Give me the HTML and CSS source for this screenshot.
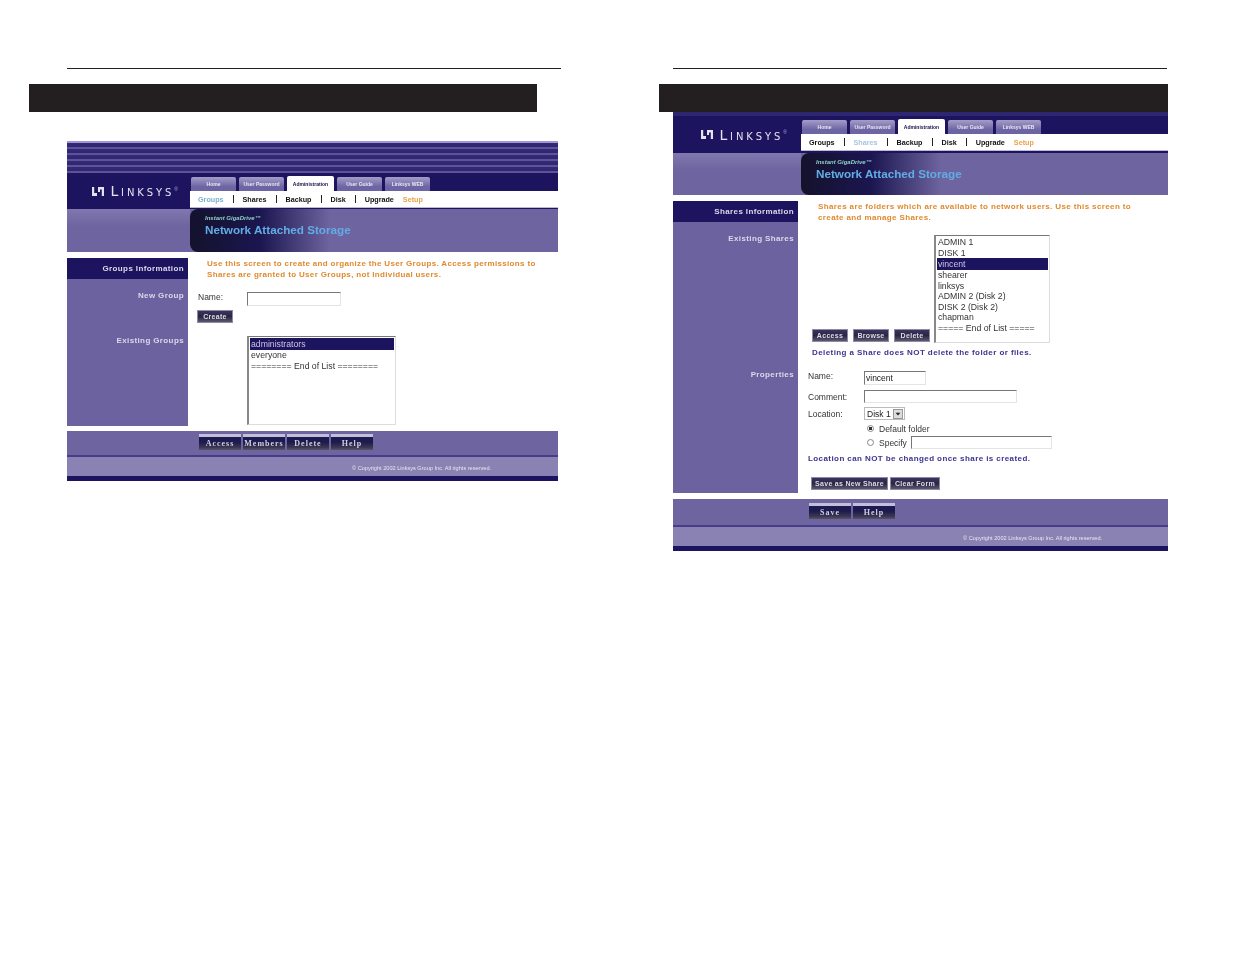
FILE: index.html
```html
<!DOCTYPE html>
<html lang="en">
<head>
<meta charset="utf-8">
<title>Linksys Network Attached Storage</title>
<link rel="stylesheet" href="styles.css">
</head>
<body>
<main class="spread">
  <section class="page page-left">
    <div class="rule"></div>
    <div class="blackbar"></div>
    <div class="nas">
      <div class="stripes"></div>
      <header class="masthead">
        <div class="logo">
          <svg class="logo-mark" viewBox="0 0 14 11" aria-hidden="true"><path d="M1 1v9h5V7H3.2V1zM7 1h6v9h-2.2V3.6H9V6H7z" fill="#e4e2ee"/></svg>
          <span class="logo-text">Linksys</span><span class="logo-reg">®</span>
        </div>
        <nav class="nav">
          <div class="tabs">
            <span class="tab">Home</span><span class="tab">User Password</span><span class="tab tab-on">Administration</span><span class="tab">User Guide</span><span class="tab">Linksys WEB</span>
          </div>
          <div class="subnav">
            <span class="sub sub-on">Groups</span><i class="bar"></i><span class="sub">Shares</span><i class="bar"></i><span class="sub">Backup</span><i class="bar"></i><span class="sub">Disk</span><i class="bar"></i><span class="sub">Upgrade</span><span class="sub sub-setup">Setup</span>
          </div>
        </nav>
      </header>
      <div class="banner">
        <div class="banner-side"></div>
        <div class="banner-title">
          <div class="banner-small">Instant GigaDrive™</div>
          <div class="banner-big">Network Attached Storage</div>
        </div>
      </div>
      <div class="body body-groups">
        <aside class="sidebar">
          <div class="side-head">Groups Information</div>
          <div class="side-label side-new">New Group</div>
          <div class="side-label side-existing">Existing Groups</div>
        </aside>
        <div class="content">
          <p class="intro">Use this screen to create and organize the User Groups. Access permissions to<br>Shares are granted to User Groups, not Individual users.</p>
          <div class="name-row"><span class="lbl lbl-up">Name:</span><input class="field field-name" type="text"></div>
          <button class="btn btn-create">Create</button>
          <div class="list list-groups">
            <div class="opt opt-on">administrators</div>
            <div class="opt">everyone</div>
            <div class="opt">======== End of List ========</div>
          </div>
        </div>
      </div>
      <div class="actions actions-groups">
        <button class="act">Access</button><button class="act">Members</button><button class="act">Delete</button><button class="act">Help</button>
      </div>
      <footer class="legal legal-left">© Copyright 2002 Linksys Group Inc. All rights reserved.</footer>
    </div>
  </section>

  <section class="page page-right">
    <div class="rule"></div>
    <div class="blackbar"></div>
    <div class="nas">
      <div class="stripes"></div>
      <header class="masthead">
        <div class="logo">
          <svg class="logo-mark" viewBox="0 0 14 11" aria-hidden="true"><path d="M1 1v9h5V7H3.2V1zM7 1h6v9h-2.2V3.6H9V6H7z" fill="#e4e2ee"/></svg>
          <span class="logo-text">Linksys</span><span class="logo-reg">®</span>
        </div>
        <nav class="nav">
          <div class="tabs">
            <span class="tab">Home</span><span class="tab">User Password</span><span class="tab tab-on">Administration</span><span class="tab">User Guide</span><span class="tab">Linksys WEB</span>
          </div>
          <div class="subnav">
            <span class="sub">Groups</span><i class="bar"></i><span class="sub sub-on sub-faint">Shares</span><i class="bar"></i><span class="sub">Backup</span><i class="bar"></i><span class="sub">Disk</span><i class="bar"></i><span class="sub">Upgrade</span><span class="sub sub-setup">Setup</span>
          </div>
        </nav>
      </header>
      <div class="banner">
        <div class="banner-side"></div>
        <div class="banner-title">
          <div class="banner-small">Instant GigaDrive™</div>
          <div class="banner-big">Network Attached Storage</div>
        </div>
      </div>
      <div class="body body-shares">
        <aside class="sidebar">
          <div class="side-head">Shares Information</div>
          <div class="side-label side-shares">Existing Shares</div>
          <div class="side-label side-props">Properties</div>
        </aside>
        <div class="content">
          <p class="intro">Shares are folders which are available to network users. Use this screen to<br>create and manage Shares.</p>
          <div class="share-row">
            <div class="share-btns"><button class="btn">Access</button><button class="btn">Browse</button><button class="btn">Delete</button></div>
            <div class="list list-shares">
              <div class="opt">ADMIN 1</div>
              <div class="opt">DISK 1</div>
              <div class="opt opt-on">vincent</div>
              <div class="opt">shearer</div>
              <div class="opt">linksys</div>
              <div class="opt">ADMIN 2 (Disk 2)</div>
              <div class="opt">DISK 2 (Disk 2)</div>
              <div class="opt">chapman</div>
              <div class="opt">===== End of List =====</div>
            </div>
          </div>
          <p class="note note-delete">Deleting a Share does NOT delete the folder or files.</p>
          <div class="form">
            <div class="form-row form-name"><span class="lbl lbl-up">Name:</span><input class="field field-share" type="text" value="vincent"></div>
            <div class="form-row form-comment"><span class="lbl">Comment:</span><input class="field field-comment" type="text"></div>
            <div class="form-row form-location"><span class="lbl">Location:</span>
              <div class="select"><span>Disk 1</span><svg class="select-arrow" viewBox="0 0 10 10" aria-hidden="true"><path d="M2 3.5h6L5 7z" fill="#222"/></svg></div>
            </div>
            <div class="radio-row radio-default"><span class="radio radio-on"></span><span>Default folder</span></div>
            <div class="radio-row radio-specify"><span class="radio"></span><span>Specify</span><input class="field field-specify" type="text"></div>
          </div>
          <p class="note note-location">Location can NOT be changed once share is created.</p>
          <div class="form-btns"><button class="btn btn-save-new">Save as New Share</button><button class="btn btn-clear">Clear Form</button></div>
        </div>
      </div>
      <div class="actions actions-shares">
        <button class="act">Save</button><button class="act">Help</button>
      </div>
      <footer class="legal legal-right">© Copyright 2002 Linksys Group Inc. All rights reserved.</footer>
    </div>
  </section>
</main>
</body>
</html>
```

FILE: styles.css
```css
* { box-sizing: border-box; }
html, body { margin: 0; padding: 0; background: #fff; }
body { font-family: "Liberation Sans", Arial, sans-serif; color: #222; width: 1235px; height: 954px; overflow: hidden; }
p { margin: 0; }

.spread { display: flex; padding-top: 68px; }
.page { display: flex; flex-direction: column; }
.page-left { width: 606px; padding-left: 67px; }
.page-right { width: 629px; }

.rule { height: 1px; background: #231f20; width: 494px; }
.blackbar { height: 28px; background: #231f20; margin-top: 15px; }
.page-left .blackbar { width: 508px; margin-left: -38px; }
.page-right .rule { margin-left: 67px; }
.page-right .blackbar { width: 509px; margin-left: 53px; }

.nas { display: flex; flex-direction: column; filter: blur(0.6px); }
.page-left .nas { width: 491px; margin-top: 29px; }
.page-right .nas { width: 495px; margin-left: 67px; }

.stripes { background: repeating-linear-gradient(#332a78 0, #2f2672 4px, #5c5399 4px, #5c5399 6px); }
.page-left .stripes { height: 32px; border-top: 2px solid #a197d6; }
.page-right .stripes { height: 4px; background: #2f2672; }

.masthead { display: flex; background: #1d1460; }
.logo { display: flex; align-items: center; justify-content: flex-end; flex: none; color: #e4e2ee; }
.page-left .logo { width: 123px; padding: 0 12px 0 0; height: 36px; }
.page-right .logo { width: 128px; padding: 0 14px 0 0; height: 37px; }
.logo-mark { width: 14px; height: 11px; margin-right: 5px; }
.logo-text { font-family: "DejaVu Sans", sans-serif; font-variant: small-caps; font-size: 14px; letter-spacing: 2.9px; line-height: 1; }
.logo-reg { font-size: 5px; margin: -5px 0 0 0; color: #a9a4cc; }

.nav { flex: 1; display: flex; flex-direction: column; }
.tabs { display: flex; gap: 3px; align-items: flex-end; padding-left: 1px; height: 18px; }
.tab { width: 45px; height: 14px; display: flex; align-items: center; justify-content: center; font-size: 5px; font-weight: 700; color: #e8e6f2; white-space: nowrap; border-radius: 2px 2px 0 0; background: linear-gradient(#a49dc8, #6d64a3 70%); }
.tab-on { width: 47px; height: 15px; color: #15104a; background: #fff; }
.subnav { height: 17px; background: #fff; display: flex; align-items: center; padding-left: 8px; border-bottom: 1px solid #bdb9d4; }
.sub { font-size: 7.2px; font-weight: 700; color: #111; white-space: nowrap; }
.sub-on { color: #7fb0cc; }
.sub-faint { color: #a5c6da; }
.sub-setup { color: #e8a24a; margin-left: 9px; }
.bar { width: 1px; height: 8px; background: #222; margin: 0 9px; }

.banner { display: flex; height: 43px; background: #6e649f; }
.page-right .banner { height: 42px; }
.banner-side { flex: none; width: 123px; background: linear-gradient(#8178b0, #6e649f 40%); }
.page-right .banner-side { width: 128px; }
.banner-title { width: 140px; padding: 6px 0 0 15px; background: linear-gradient(90deg, #14122c 0, #1b1650 50%, #6e649f 100%); border-radius: 8px 0 0 8px; }
.banner-small { font-size: 6px; font-weight: 700; font-style: italic; color: #8fd0c8; line-height: 7px; }
.banner-big { font-size: 11.7px; font-weight: 700; color: #62ace6; line-height: 15px; white-space: nowrap; }

.body { display: flex; margin-top: 6px; background: #fff; }
.body-groups { height: 168px; }
.body-shares { height: 292px; }
.sidebar { flex: none; background: #6b629f; text-align: right; color: #dcd9ea; font-size: 8px; font-weight: 700; letter-spacing: 0.38px; }
.body-groups .sidebar { width: 121px; }
.body-shares .sidebar { width: 125px; }
.side-head { height: 21px; line-height: 21px; background: #1d1460; padding-right: 4px; white-space: nowrap; }
.side-label { padding-right: 4px; line-height: 10px; }
.side-new { margin-top: 12px; }
.side-existing { margin-top: 35px; }
.side-shares { margin-top: 12px; }
.side-props { margin-top: 126px; }

.content { flex: 1; position: relative; min-width: 0; }
.intro { color: #e08a2e; font-size: 8px; font-weight: 700; letter-spacing: 0.34px; line-height: 11px; white-space: nowrap; }
.body-groups .intro { margin: 0 0 0 19px; }
.body-shares .intro { margin: 0 0 0 20px; letter-spacing: 0.38px; }

.lbl { display: inline-block; font-size: 8.5px; color: #333; }
.lbl-up { margin-top: -4px; }
.field { display: block; padding: 0 1px; font: 8.5px "Liberation Sans", sans-serif; color: #222; background: #fff; border: 1px solid #e4e4e4; border-top: 1px solid #777; border-left: 1px solid #777; border-radius: 0; outline: none; }

.name-row { display: flex; align-items: center; margin: 12px 0 0 10px; height: 14px; }
.name-row .lbl { width: 49px; }
.field-name { width: 94px; height: 14px; }

.btn { display: block; height: 13px; padding: 0; font: 700 7px "Liberation Sans", sans-serif; letter-spacing: 0.3px; color: #dcdaea; border: 1px solid #8e8aa6; border-radius: 0; background: linear-gradient(#3a3560, #2a2640 50%, #5c5870); white-space: nowrap; }
.btn-create { width: 36px; margin: 4px 0 0 9px; }

.list { background: #fff; border: 1px solid #ddd; border-top: 1px solid #777; border-left: 2px solid #888; font-size: 8.7px; line-height: 10.5px; color: #333; padding: 1px; }
.opt { height: 10.5px; white-space: nowrap; padding-left: 1px; }
.opt-on { background: #1d1460; color: #c8c6de; height: 12px; line-height: 12px; }
.list-groups { width: 149px; height: 89px; margin: 13px 0 0 59px; }
.list-shares { width: 116px; height: 108px; }

.share-row { display: flex; align-items: flex-end; margin: 12px 0 0 14px; }
.share-btns { display: flex; gap: 5px; width: 122px; margin-bottom: 1px; }
.share-btns .btn { width: 36px; }
.note { color: #3c3490; font-size: 8px; font-weight: 700; letter-spacing: 0.42px; line-height: 10px; white-space: nowrap; }
.note-delete { margin: 5px 0 0 14px; }
.note-location { margin: 5px 0 0 10px; }

.form { margin: 13px 0 0 10px; }
.form-row { display: flex; align-items: center; }
.form-row .lbl { width: 56px; }
.form-name { height: 14px; }
.field-share { width: 62px; height: 14px; }
.form-comment { height: 13px; margin-top: 5px; }
.field-comment { width: 153px; height: 13px; }
.form-location { height: 13px; margin-top: 4px; }
.select { width: 41px; height: 13px; display: flex; align-items: center; justify-content: space-between; padding: 0 1px 0 2px; font-size: 8.5px; border: 1px solid #bbb; background: #fff; }
.select-arrow { width: 10px; height: 10px; background: #ddd; border: 1px solid #999; }
.radio-row { display: flex; align-items: center; font-size: 8.5px; color: #333; margin-left: 59px; height: 13px; }
.radio-default { margin-top: 2px; }
.radio-specify { margin-top: 1px; }
.radio { width: 7px; height: 7px; border-radius: 50%; border: 1px solid #888; background: #fff; margin: 0 5px 0 0; flex: none; }
.radio-on { background: radial-gradient(#333 0 1.6px, #fff 2px); }
.field-specify { width: 141px; height: 13px; margin-left: 4px; }

.form-btns { display: flex; gap: 2px; margin: 13px 0 0 13px; }
.btn-save-new { width: 77px; }
.btn-clear { width: 50px; }

.actions { display: flex; gap: 2px; height: 26px; margin-top: 5px; background: #6e649f; padding-top: 3px; border-bottom: 2px solid #453c8a; }
.actions-groups { padding-left: 132px; }
.actions-shares { padding-left: 136px; margin-top: 6px; height: 28px; padding-top: 4px; }
.act { width: 42px; height: 16px; padding: 0; font: 700 8px "Liberation Serif", serif; letter-spacing: 1px; color: #d0cee0; border: 0; border-top: 3px solid #c3bfda; border-radius: 0; background: linear-gradient(#1d1a50 40%, #3b3850 80%, #57546a); }

.legal { height: 24px; padding-top: 2px; background: #8a82b3; border-bottom: 5px solid #1d1460; font-size: 5.6px; color: #e8e6f2; line-height: 19px; white-space: nowrap; }
.legal-left { padding-left: 285px; }
.legal-right { padding-left: 290px; }
```
